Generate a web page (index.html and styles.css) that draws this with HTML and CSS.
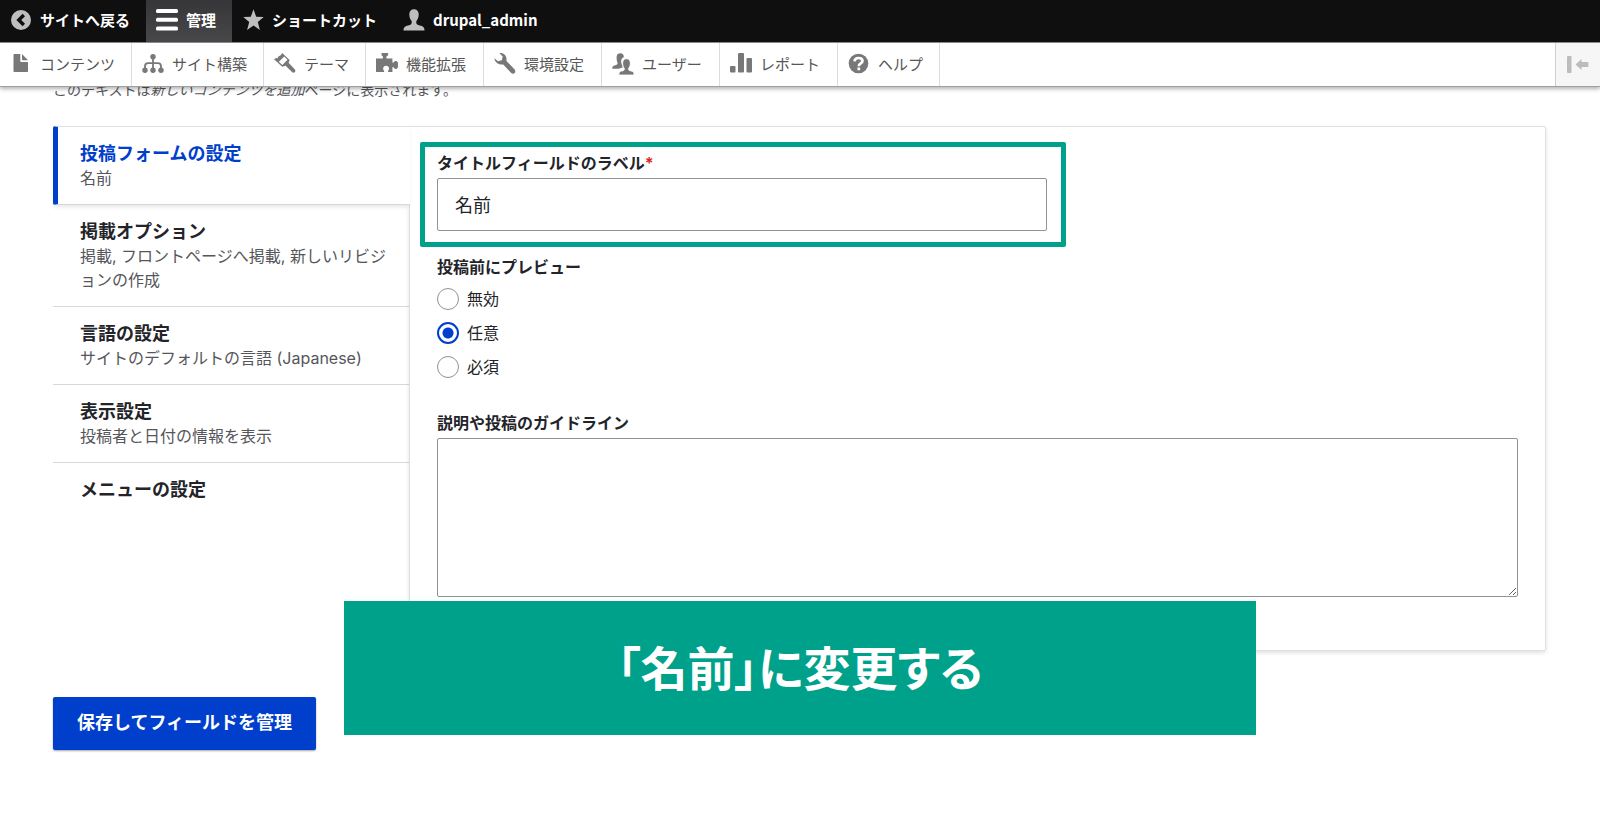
FILE: index.html
```html
<!DOCTYPE html>
<html lang="ja">
<head>
<meta charset="utf-8">
<title>コンテンツタイプの編集</title>
<link rel="stylesheet" href="styles.css">
</head>
<body>
<header class="toolbar">
  <nav class="bar" aria-label="ツールバー">
    <a class="bar-item" href="#">
      <svg class="icon" viewBox="0 0 22 22"><path fill-rule="evenodd" d="M11 1a10 10 0 1 0 0 20 10 10 0 0 0 0-20zM12.6 4.8 15 7.200 11.200 11 15 14.800 12.600 17.200 6.400 11z"/></svg>
      <span>サイトへ戻る</span>
    </a>
    <a class="bar-item is-active" href="#">
      <svg class="icon" viewBox="0 0 22 22"><rect y="0" width="22" height="4" rx="1.500"/><rect y="8.700" width="22" height="4" rx="1.500"/><rect y="17.400" width="22" height="4" rx="1.500"/></svg>
      <span>管理</span>
    </a>
    <a class="bar-item" href="#">
      <svg class="icon" viewBox="0 0 22 22"><path d="M11.500.3l2.700 7.500 7.500.3-5.900 4.800 2.100 8.100-6.400-4.500-6.400 4.500 2.100-8.100L1.300 8.100l7.500-.3z"/></svg>
      <span>ショートカット</span>
    </a>
    <a class="bar-item" href="#">
      <svg class="icon" viewBox="0 0 22 22"><path d="M11 .2c3 0 4.700 2 4.700 5 0 2.600-.6 4.800-2 6.300-.6.700-.6 3.100.2 3.800 1.200 1 4.900 1.200 6.400 2.700.9.900 1.200 2.200 1.200 3.400H.5c0-1.200.3-2.500 1.200-3.400 1.500-1.500 5.200-1.700 6.400-2.700.8-.7.800-3.100.2-3.800-1.400-1.500-2-3.700-2-6.300 0-3 1.700-5 4.700-5z"/></svg>
      <span>drupal_admin</span>
    </a>
  </nav>
  <nav class="tray" aria-label="管理メニュー">
    <a class="tray-item" href="#">
      <svg class="icon" viewBox="0 0 22 22"><path d="M4.500 1h5.800v7.300c0 .5.300.8.800.8H18V18c0 .6-.4 1-1 1H4.500c-.6 0-1-.4-1-1V2c0-.6.400-1 1-1zM12 1l6 6.200h-5.200c-.5 0-.8-.3-.8-.8z"/></svg>
      <span>コンテンツ</span>
    </a>
    <a class="tray-item" href="#">
      <svg class="icon" viewBox="0 0 22 22"><g fill="none" stroke="currentColor" stroke-width="1.800"><path d="M11 4v14M3 17v-3.500c0-2.200 1-3.300 3.200-3.300h9.600c2.200 0 3.200 1.100 3.200 3.300V17"/></g><circle cx="11" cy="3.700" r="2.700"/><circle cx="3" cy="17.300" r="2.700"/><circle cx="11" cy="17.300" r="2.700"/><circle cx="19" cy="17.300" r="2.700"/></svg>
      <span>サイト構築</span>
    </a>
    <a class="tray-item" href="#">
      <svg class="icon" viewBox="0 0 22 22"><path fill-rule="evenodd" d="M8.200 0 15.600 7 14.600 9.800 20.700 16.300c.9.900.9 2 .1 2.800-.8.900-2 .8-2.800 0L11.600 12.700 8.200 13.800 0 6.200l2.400-1.200 1.200.3.800-1.900L6.700 2.300zM10.300 3.400 4.800 8.800 8.300 12.100 13.500 6.700z"/></svg>
      <span>テーマ</span>
    </a>
    <a class="tray-item tray-item-wide" href="#">
      <svg class="icon" viewBox="0 0 22 22"><path d="M5.500 0h6.600v2.200l-1.700 1.200v2h6v4.200h1.300l1.200-1.700h1.500L22 9.500v4.800l-1.600 1.600h-1.500l-1.200-1.700h-1.300V19h-4.300v-1.200c.7-.6 1-1.200 1-2 0-1.800-1.300-3-3-3s-3 1.200-3 3c0 .8.300 1.400 1 2V19H0V5.400h6.900v-2L5.500 2.200z"/></svg>
      <span>機能拡張</span>
    </a>
    <a class="tray-item tray-item-wide" href="#">
      <svg class="icon" viewBox="0 0 22 22"><path d="M5.500.2c3.700-.6 7.200 2.300 7 6.100 0 .8-.2 1.300 0 1.700L20.400 16.300c1.200 1.300 1.200 2.700.3 3.700-1 1-2.500.9-3.700-.3L9.200 11.500c-.5-.2-1.300.1-2.200 0C3.300 11.300.3 8.100.4 5.200L4 8.300 7.800 7.300 8.700 3.500z"/></svg>
      <span>環境設定</span>
    </a>
    <a class="tray-item tray-item-wide" href="#">
      <svg class="icon" viewBox="0 0 22 22"><path d="M8.300.2c2.200 0 3.600 1.500 3.600 3.700-2.300 1-3.200 3.100-2.600 6 .4 1.900 1.300 3.200 1.600 4.300-1.300.8-3.400.9-4.300 1.600H.3c0-1.300.3-2.200 1-2.700 1.200-.9 3.300-.8 4-1.800.4-.5.300-1.500 0-2C4.900 8.300 4.600 6.200 4.600 4.200 4.600 1.700 6 .2 8.300.2z"/><path stroke="#fff" stroke-width=".8" d="M14.500 5.700c2.400 0 3.800 1.500 3.800 4.400 0 2-.4 3.700-1.500 5-.4.500-.4 1.600.1 2.100.9.800 3.600.7 4.500 1.900.5.600.6 1.600.6 2.900H6.900c0-1.300.1-2.300.6-2.900.9-1.200 3.600-1.100 4.500-1.900.5-.5.500-1.600.1-2.100-1-1.300-1.400-3-1.400-5 0-2.900 1.400-4.400 3.800-4.400z"/></svg>
      <span>ユーザー</span>
    </a>
    <a class="tray-item tray-item-wide" href="#">
      <svg class="icon" viewBox="0 0 22 22"><rect x="0" y="13" width="5.500" height="6.500" rx="1"/><rect x="8" y="0" width="6" height="19.500" rx="1"/><rect x="16.500" y="5" width="5.500" height="14.500" rx="1"/></svg>
      <span>レポート</span>
    </a>
    <a class="tray-item" href="#">
      <svg class="icon" viewBox="0 0 22 22"><circle cx="10.500" cy="10.500" r="9.800"/><g fill="none" stroke="#fff" stroke-width="2.700"><path d="M6.500 8.300C6.700 6 8.200 5 10.500 5c2.500 0 4 1.200 4 3 0 2.600-3.700 2.400-3.700 5.200M10.800 14.500v2.700"/></g></svg>
      <span>ヘルプ</span>
    </a>
    <button class="tray-toggle" type="button" aria-label="縦方向">
      <svg class="icon" viewBox="0 0 22 22"><rect x="0" y="2" width="4.500" height="17" rx="1"/><path d="M8.500 10.500 14.500 5v3h6.800v5h-6.800v3z"/></svg>
    </button>
  </nav>
</header>

<main class="page">
  <p class="help">このテキストは<em>新しいコンテンツを追加</em>ページに表示されます。</p>
  <form class="form">
    <div class="settings">
      <nav class="tabs" aria-label="設定">
        <a class="tab is-selected" href="#"><strong class="tab-title">投稿フォームの設定</strong><span class="tab-summary">名前</span></a>
        <a class="tab" href="#"><strong class="tab-title">掲載オプション</strong><span class="tab-summary">掲載, フロントページへ掲載, 新しいリビジョンの作成</span></a>
        <a class="tab" href="#"><strong class="tab-title">言語の設定</strong><span class="tab-summary">サイトのデフォルトの言語 (Japanese)</span></a>
        <a class="tab" href="#"><strong class="tab-title">表示設定</strong><span class="tab-summary">投稿者と日付の情報を表示</span></a>
        <a class="tab" href="#"><strong class="tab-title">メニューの設定</strong></a>
      </nav>
      <div class="pane">
        <div class="field field-marked">
          <label class="label" for="title-label">タイトルフィールドのラベル<span class="required">*</span></label>
          <input class="text-input" id="title-label" type="text" value="名前">
        </div>
        <fieldset class="choices">
          <legend class="label">投稿前にプレビュー</legend>
          <div class="choice"><input class="radio" type="radio" name="preview" id="preview-off"><label for="preview-off">無効</label></div>
          <div class="choice"><input class="radio" type="radio" name="preview" id="preview-optional" checked><label for="preview-optional">任意</label></div>
          <div class="choice"><input class="radio" type="radio" name="preview" id="preview-required"><label for="preview-required">必須</label></div>
        </fieldset>
        <div class="field">
          <label class="label" for="guidelines">説明や投稿のガイドライン</label>
          <textarea class="textarea" id="guidelines"></textarea>
        </div>
      </div>
    </div>
    <button class="submit" type="button">保存してフィールドを管理</button>
  </form>
</main>
<div class="caption">「名前」に変更する</div>
</body>
</html>
```
FILE: styles.css
```css
* { box-sizing: border-box; }

body {
  margin: 0;
  position: relative;
  min-height: 100vh;
  background: #fff;
  color: #232429;
  font-family: Inter, "Noto Sans CJK JP", sans-serif;
  font-size: 16px;
  line-height: 24px;
}

a { color: inherit; text-decoration: none; }

.icon { width: 22px; height: 22px; flex: none; fill: currentColor; }

/* Toolbar */
.toolbar {
  position: sticky;
  top: 0;
  z-index: 2;
  border-bottom: 1px solid #a0a0a0;
  box-shadow: 0 2px 4px rgba(0, 0, 0, 0.3);
  font-family: "Noto Sans CJK JP", sans-serif;
  font-size: 15px;
}

.bar { display: flex; height: 42px; background: #0f0f0f; }

.bar-item {
  display: flex;
  align-items: center;
  gap: 8px;
  padding: 0 16px 2px 10px;
  color: #fff;
  font-weight: 700;
}

.bar-item .icon { color: #bebebe; }
.bar-item.is-active { background: linear-gradient(#363638, #48484b); }
.bar-item.is-active .icon { color: #fff; }

.tray { display: flex; height: 44px; background: #fff; border-top: 1px solid #8a8a8a; }

.tray-item {
  display: flex;
  align-items: center;
  gap: 8px;
  padding: 0 16px 1px 10px;
  border-right: 1px solid #dcdcdf;
  color: #565656;
}

.tray-item-wide { min-width: 118px; }
.tray-item .icon { color: #787878; }

.tray-toggle {
  margin-left: auto;
  width: 45px;
  padding: 0 0 0 11px;
  display: flex;
  align-items: center;
  border: 0;
  border-left: 1px solid #d0d0d0;
  background: #f5f6f5;
  color: #bcbcbc;
}

/* Page */
.page { padding: 0 54px 80px 53px; }

.help {
  margin: -8px 0 26px;
  color: #55565b;
  font-size: 14px;
  line-height: 21px;
}

.settings {
  display: grid;
  grid-template-columns: 356px minmax(0, 1fr);
}

.tabs { display: flex; flex-direction: column; padding-bottom: 24px; }

.tab {
  display: flex;
  flex-direction: column;
  padding: 15px 20px 14px 27px;
  border-bottom: 1px solid #d5d8dc;
}

.tab:last-child { border-bottom: 0; }

.tab.is-selected {
  position: relative;
  margin-right: -1px;
  padding-left: 22px;
  background: #fff;
  border-top: 1px solid #dedfe8;
  border-left: 5px solid #003ecc;
  border-radius: 2px 0 0 2px;
  box-shadow: 0 3px 4px -1px rgba(0, 0, 0, 0.1);
}

.is-selected .tab-title { color: #003ecc; }
.tab-title { font-size: 18px; }
.tab-summary { color: #55565b; line-break: anywhere; }

.pane {
  min-width: 0;
  padding: 25px 27px 53px;
  border: 1px solid #dedfe8;
  border-radius: 0 2px 2px 0;
  box-shadow: 0 2px 4px rgba(0, 0, 0, 0.12);
}

.field { display: flex; flex-direction: column; gap: 3px; }

.field-marked {
  width: 646px;
  max-width: 100%;
  margin: -10px 0 8px -17px;
  padding: 4px 14px 11px 12px;
  border: 5px solid #00a18b;
  border-radius: 2px;
}

.label { padding: 0; font-weight: 700; }
.required { color: #dc2323; }

.text-input {
  height: 53px;
  padding: 0 17px 2px;
  border: 1px solid #919297;
  border-radius: 2px;
  background: #fff;
  color: #232429;
  font: inherit;
  font-size: 18px;
}

.choices {
  display: flex;
  flex-direction: column;
  margin: 0 0 27px;
  padding: 0;
  border: 0;
}

.choices .label { margin-bottom: 3px; }
.choice { display: flex; align-items: center; gap: 8px; height: 34px; }

.radio {
  appearance: none;
  width: 22px;
  height: 22px;
  margin: 0;
  border: 1px solid #919297;
  border-radius: 50%;
  background: #fff;
}

.radio:checked {
  border: 2px solid #003ecc;
  background: radial-gradient(circle, #003ecc 5px, #fff 6px);
}

.textarea {
  display: block;
  width: 100%;
  height: 159px;
  padding: 12px 16px;
  border: 1px solid #919297;
  border-radius: 2px;
  font: inherit;
  resize: vertical;
}

.submit {
  margin-top: 46px;
  padding: 14px 24px 15px;
  border: 0;
  border-radius: 2px;
  background: #003ecc;
  box-shadow: 0 1px 2px rgba(0, 0, 0, 0.35);
  color: #fff;
  font: inherit;
  font-size: 18px;
  font-weight: 700;
}

/* Caption laid over the page */
.caption {
  position: absolute;
  top: 601px;
  left: 0;
  right: 0;
  z-index: 1;
  width: 57%;
  margin: 0 auto;
  padding: 30px 16px 34px;
  background: #00a18b;
  color: #fff;
  font-family: "Noto Sans CJK JP", sans-serif;
  font-size: 47px;
  font-weight: 700;
  font-feature-settings: "palt";
  line-height: 70px;
  text-align: center;
}
```
